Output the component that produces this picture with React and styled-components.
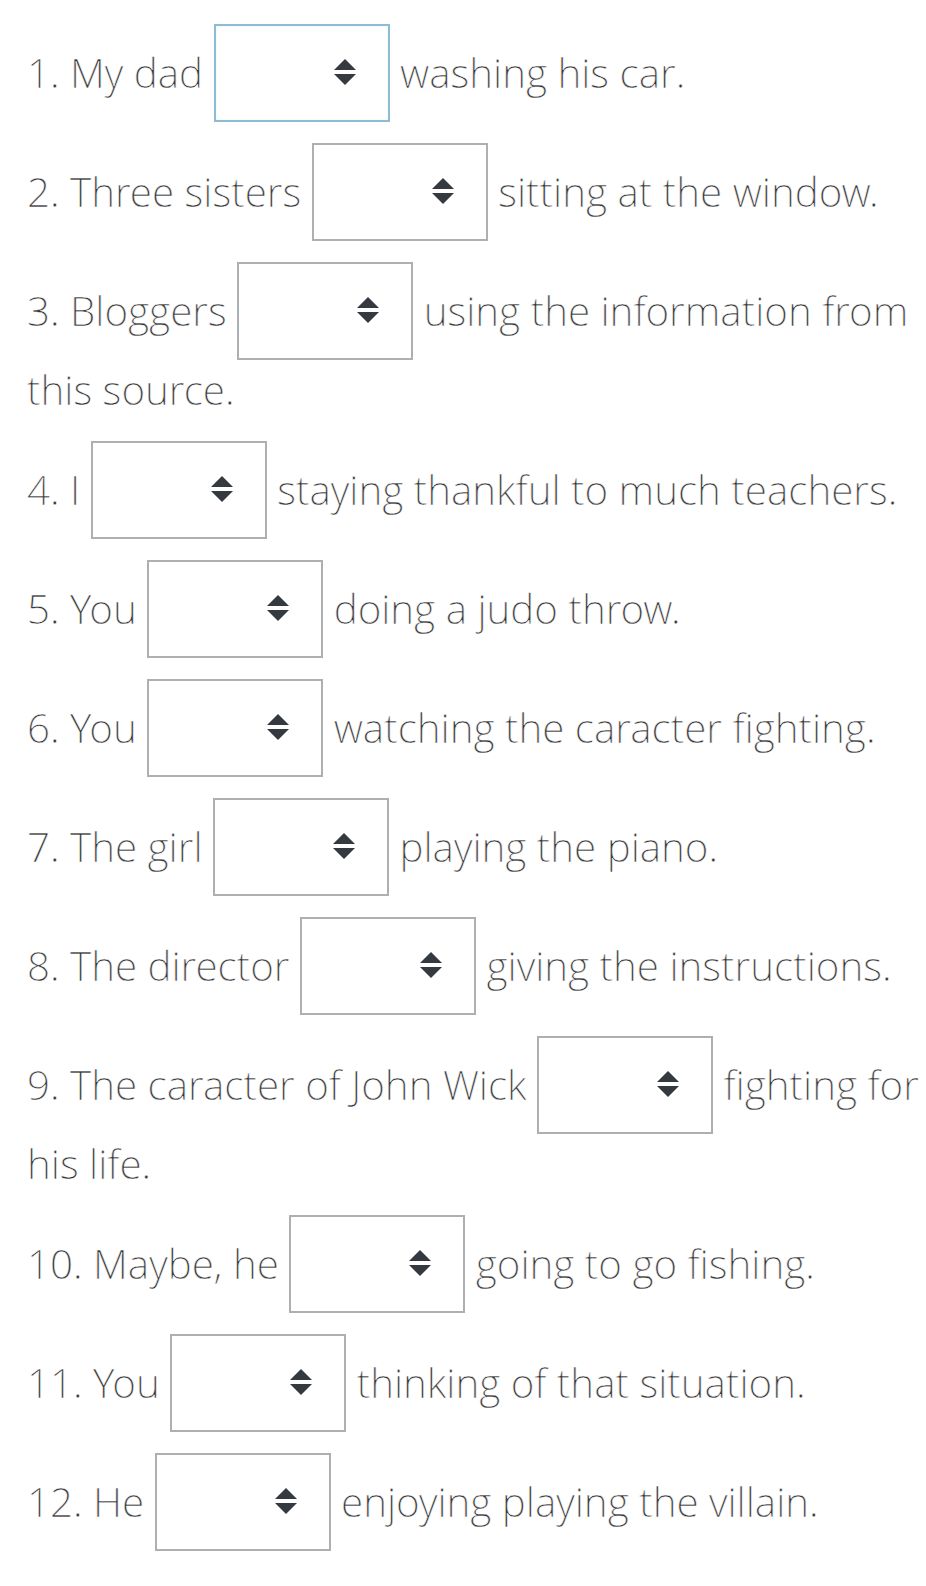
import styled, { createGlobalStyle } from 'styled-components';

const GlobalStyle = createGlobalStyle`
  html, body {
    margin: 0;
    padding: 0;
    background: #fff;
  }
  body {
    font-family: 'Open Sans Light', 'Open Sans', 'Noto Sans', sans-serif;
    color: #343434;
  }
`;

const questions = [
  { before: '1. My dad', after: 'washing his car.', focused: true },
  { before: '2. Three sisters', after: 'sitting at the window.' },
  { before: '3. Bloggers', after: 'using the information from this source.' },
  { before: '4. I', after: 'staying thankful to much teachers.' },
  { before: '5. You', after: 'doing a judo throw.' },
  { before: '6. You', after: 'watching the caracter fighting.' },
  { before: '7. The girl', after: 'playing the piano.' },
  { before: '8. The director', after: 'giving the instructions.' },
  { before: '9. The caracter of John Wick', after: 'fighting for his life.' },
  { before: '10. Maybe, he', after: 'going to go fishing.' },
  { before: '11. You', after: 'thinking of that situation.' },
  { before: '12. He', after: 'enjoying playing the villain.' },
];

const SortArrows = () => (
  <ArrowSvg viewBox="0 0 22 27" aria-hidden="true">
    <polygon points="0,11 11,0 22,11" />
    <polygon points="0,15 22,15 11,26" />
  </ArrowSvg>
);

const App = () => {
  return (
    <>
      <GlobalStyle />
      <Sheet>
        {questions.map((q, i) => (
          <Question key={i}>
            {q.before}{' '}
            <SelectBox role="combobox" $focused={q.focused}>
              <SortArrows />
            </SelectBox>{' '}
            {q.after}
          </Question>
        ))}
      </Sheet>
    </>
  );
};

export default App;

const Sheet = styled.div`
  width: 926px;
  box-sizing: border-box;
  padding: 24px 0 0 27px;
`;

const Question = styled.p`
  margin: 0 0 21px;
  font-size: 40.3px;
  font-weight: 300;
  line-height: 60px;
  color: #343434;
  -webkit-text-stroke: 0.5px #fff;
`;

const SelectBox = styled.span`
  display: inline-block;
  box-sizing: border-box;
  width: 176px;
  height: 98px;
  padding: 0 32px 0 0;
  border: 2px solid ${({ $focused }) => ($focused ? '#8dbdd3' : '#adb0b3')};
  background: #fff;
  overflow: hidden;
  vertical-align: -34px;
  box-shadow: ${({ $focused }) =>
    $focused ? 'inset 0 0 2px rgba(141, 189, 211, 0.25)' : 'none'};
`;

const ArrowSvg = styled.svg`
  display: block;
  width: 22px;
  height: 27px;
  margin: 33px 0 0 auto;
  fill: #343a40;
`;
